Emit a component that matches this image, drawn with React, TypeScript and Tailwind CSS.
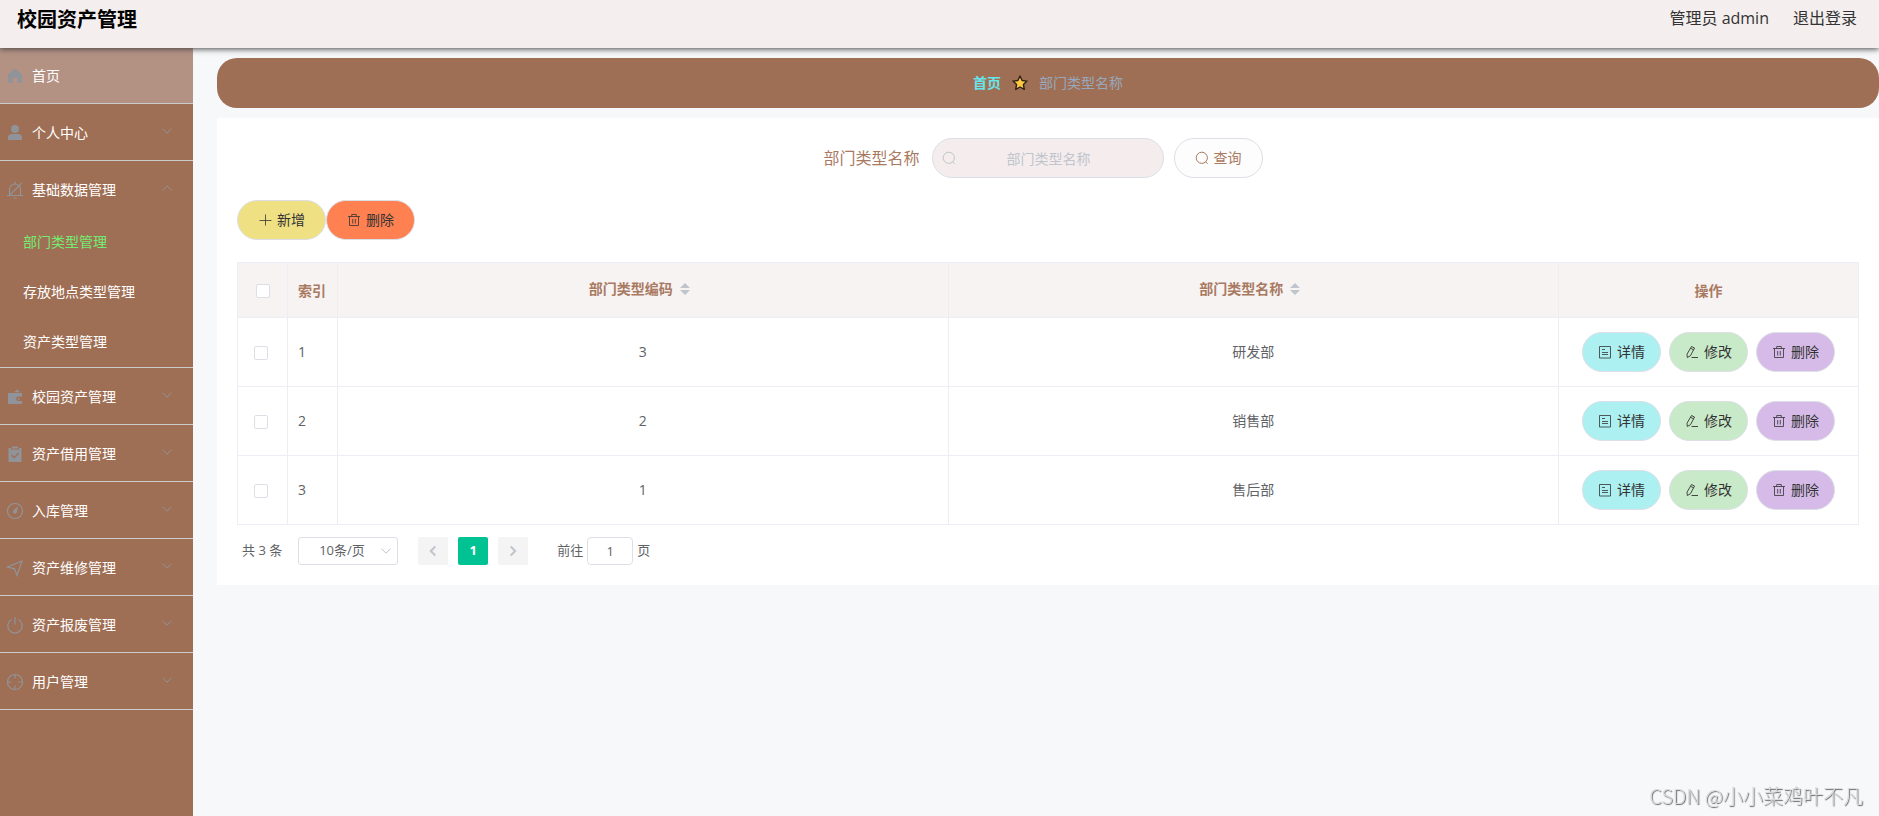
import React, { useState } from 'react';

type IconProps = { className?: string };

function SvgIcon({ className, children }: { className?: string; children: React.ReactNode }) {
  return (
    <svg viewBox="0 0 18 18" className={className} fill="none" stroke="currentColor" strokeWidth="1.2" aria-hidden="true">
      {children}
    </svg>
  );
}

const HomeIcon = ({ className }: IconProps) => (
  <SvgIcon className={className}>
    <path d="M9 1.600 16 7.400V16h-4.600v-5.200H6.600V16H2V7.400z" fill="currentColor" stroke="none" />
  </SvgIcon>
);

const UserIcon = ({ className }: IconProps) => (
  <SvgIcon className={className}>
    <circle cx="9" cy="5" r="4" fill="currentColor" stroke="none" />
    <path d="M2 16v-2.600C2 11.500 3.500 10 5.400 10h7.200c1.900 0 3.400 1.500 3.400 3.400V16z" fill="currentColor" stroke="none" />
  </SvgIcon>
);

const MuteIcon = ({ className }: IconProps) => (
  <SvgIcon className={className}>
    <path d="M3.500 14.500V8.500a5.500 5.500 0 0 1 11 0v6M1 14.500h16M9 .8v2.200M7.500 17h3M15.800 1.800 3.500 14.500" />
  </SvgIcon>
);

const WalletIcon = ({ className }: IconProps) => (
  <SvgIcon className={className}>
    <path d="M8 4.200 11.300 1.500 14 4.200zM2 5h14v3.500h-3.500a2.300 2.300 0 0 0 0 4.600H16V16H2z" fill="currentColor" stroke="none" />
    <circle cx="12.700" cy="10.800" r="1" fill="currentColor" stroke="none" />
  </SvgIcon>
);

const ClaimIcon = ({ className }: IconProps) => (
  <SvgIcon className={className}>
    <path d="M2.500 3H5v1.500h8V3h2.500v14h-13z" fill="currentColor" stroke="none" />
    <path d="M6 1.500h6v2H6z" fill="currentColor" stroke="none" />
    <path d="m5.500 10 2.700 2.700L12.700 8" stroke="#9f6f55" strokeWidth="1.200" />
  </SvgIcon>
);

const OdometerIcon = ({ className }: IconProps) => (
  <SvgIcon className={className}>
    <circle cx="9" cy="9" r="7.500" />
    <path d="m12 4.200-1 5.600a2 2 0 1 1-3.400-1.600z" fill="currentColor" stroke="none" />
  </SvgIcon>
);

const PositionIcon = ({ className }: IconProps) => (
  <SvgIcon className={className}>
    <path d="M16 2 1.500 8l7 1.800L11 16.500z" />
  </SvgIcon>
);

const SwitchIcon = ({ className }: IconProps) => (
  <SvgIcon className={className}>
    <path d="M5.500 3.600a7.200 7.200 0 1 0 7 0M9 1v7.500" />
  </SvgIcon>
);

const AimIcon = ({ className }: IconProps) => (
  <SvgIcon className={className}>
    <circle cx="9" cy="9" r="7.500" />
    <path d="M9 1.500v4M9 12.500v4M1.500 9h4M12.500 9h4" />
  </SvgIcon>
);

const ChevronIcon = ({ className }: IconProps) => (
  <svg viewBox="0 0 12 12" className={className} fill="none" stroke="currentColor" aria-hidden="true">
    <path d="m1.500 3.700 4.500 4.500 4.500-4.500" />
  </svg>
);

const SearchIcon = ({ className }: IconProps) => (
  <svg viewBox="0 0 14 14" className={className} fill="none" stroke="currentColor" aria-hidden="true">
    <circle cx="6.800" cy="6.800" r="5.600" />
    <path d="m10.600 10.800 2 2" />
  </svg>
);

const PlusIcon = ({ className }: IconProps) => (
  <svg viewBox="0 0 14 14" className={className} fill="none" stroke="currentColor" strokeWidth="0.8" aria-hidden="true">
    <path d="M7.500 1.500v11M1.500 7.500h12" />
  </svg>
);

const DeleteIcon = ({ className }: IconProps) => (
  <svg viewBox="0 0 14 14" className={className} fill="none" stroke="currentColor" strokeWidth="0.8" aria-hidden="true">
    <path d="M1 3.500h12M2.500 3.500v9h9v-9M4.700 3.500v-2h4.600v2M5.700 6v4.500M8.300 6v4.500" />
  </svg>
);

const TicketIcon = ({ className }: IconProps) => (
  <svg viewBox="0 0 14 14" className={className} fill="none" stroke="currentColor" strokeWidth="0.8" aria-hidden="true">
    <path d="M1.500 1.500h11v11.500h-11zM4 4.500h3M4 7.500h6M4 9.500h6" />
  </svg>
);

const EditIcon = ({ className }: IconProps) => (
  <svg viewBox="0 0 14 14" className={className} fill="none" stroke="currentColor" strokeWidth="0.9" aria-hidden="true">
    <path d="M6.500 1.500 9.500 3 5.500 10.700l-3.200 1.800-.3-3.300zM5.600 3.300l3 1.500M6.500 12.500H13" />
  </svg>
);

const StarIcon = ({ className }: IconProps) => (
  <svg viewBox="0 0 16 16" className={className} aria-hidden="true">
    <path
      d="m8 1 2.100 4.500 4.900.6-3.600 3.400.9 4.900L8 12l-4.300 2.400.9-4.900L1 6.100l4.900-.6z"
      fill="#ffc83d"
      stroke="#2b2118"
      strokeWidth="1.400"
      strokeLinejoin="round"
    />
  </svg>
);

const SortIcon = ({ className }: IconProps) => (
  <svg viewBox="0 0 10 12" className={className} fill="currentColor" aria-hidden="true">
    <path d="M5 0 10 5H0zM5 12 0 7h10z" />
  </svg>
);

const menus = [
  { title: '个人中心', icon: UserIcon, children: [] },
  { title: '基础数据管理', icon: MuteIcon, children: ['部门类型管理', '存放地点类型管理', '资产类型管理'] },
  { title: '校园资产管理', icon: WalletIcon, children: [] },
  { title: '资产借用管理', icon: ClaimIcon, children: [] },
  { title: '入库管理', icon: OdometerIcon, children: [] },
  { title: '资产维修管理', icon: PositionIcon, children: [] },
  { title: '资产报废管理', icon: SwitchIcon, children: [] },
  { title: '用户管理', icon: AimIcon, children: [] },
];

const rows = [
  { code: 3, name: '研发部' },
  { code: 2, name: '销售部' },
  { code: 1, name: '售后部' },
];

const checkboxClass =
  'block size-3.5 appearance-none rounded-[2px] border border-[#dcdfe6] bg-white checked:border-[#00c292] checked:bg-[#00c292]';

const cellClass = 'border-r border-b border-[#ebeef5]';

function Sidebar() {
  const [opened, setOpened] = useState('基础数据管理');
  const [active, setActive] = useState('部门类型管理');

  return (
    <nav className="w-[193px] shrink-0 bg-[#9f6f55] text-sm text-white">
      <a href="#home" className="flex h-14 items-center border-b border-[#ccc] bg-[#b39284] pl-1.5">
        <HomeIcon className="mr-2 size-[18px] text-[#909399]" />
        首页
      </a>
      {menus.map((menu) => {
        const isOpen = opened === menu.title;
        return (
          <div key={menu.title} className="border-b border-[#ccc]">
            <button
              type="button"
              aria-expanded={isOpen}
              onClick={() => setOpened(isOpen ? '' : menu.title)}
              className="flex h-14 w-full items-center pt-0.5 pr-5 pl-1.5"
            >
              <menu.icon className="mr-2 size-[18px] text-[#909399]" />
              {menu.title}
              <ChevronIcon className={`mb-1 ml-auto size-3 text-[#909399] ${isOpen ? 'rotate-180' : ''}`} />
            </button>
            {isOpen &&
              menu.children.map((child) => (
                <a
                  key={child}
                  href="#menu"
                  onClick={() => setActive(child)}
                  className={`flex h-[50px] items-center pl-[23px] ${active === child ? 'text-[#72ed72]' : 'text-white'}`}
                >
                  {child}
                </a>
              ))}
          </div>
        );
      })}
    </nav>
  );
}

function Pagination() {
  return (
    <div className="mt-3 flex h-7 items-center pl-[5px] text-[13px] text-[#606266]">
      <span className="mr-4">共 3 条</span>
      <div className="relative mr-5 w-[100px]">
        <select
          aria-label="每页条数"
          className="block h-7 w-full appearance-none rounded-[3px] border border-[#dcdfe6] bg-white pl-5 text-[13px]"
        >
          <option>10条/页</option>
          <option>20条/页</option>
          <option>50条/页</option>
        </select>
        <ChevronIcon className="pointer-events-none absolute top-2 right-1.5 size-3 text-[#c0c4cc]" />
      </div>
      <div className="flex gap-2.5">
        <button type="button" aria-label="上一页" disabled className="flex h-7 w-[30px] items-center justify-center rounded-[2px] bg-[#f4f4f5]">
          <ChevronIcon className="size-3 rotate-90 stroke-2 text-[#c0c4cc]" />
        </button>
        <button type="button" className="h-7 w-[30px] rounded-[2px] bg-[#00c292] font-bold text-white">
          1
        </button>
        <button type="button" aria-label="下一页" disabled className="flex h-7 w-[30px] items-center justify-center rounded-[2px] bg-[#f4f4f5]">
          <ChevronIcon className="size-3 -rotate-90 stroke-2 text-[#c0c4cc]" />
        </button>
      </div>
      <label className="ml-[29px] flex items-center gap-1">
        前往
        <input defaultValue="1" className="h-7 w-[46px] rounded-[4px] border border-[#dcdfe6] bg-white text-center" />
        页
      </label>
    </div>
  );
}

export default function App() {
  return (
    <div className="flex min-h-screen flex-col bg-[#f7f8fa] font-['Open_Sans','Noto_Sans_CJK_SC',sans-serif]">
      <header className="relative z-10 flex h-12 items-start justify-between bg-[#f4eeee] pr-[22px] pl-[17px] shadow-[0_1px_6px_#444]">
        <h1 className="text-xl leading-10 font-bold text-black">校园资产管理</h1>
        <div className="flex gap-6 text-base leading-9 text-[#333]">
          <span>管理员 admin</span>
          <a href="#logout">退出登录</a>
        </div>
      </header>

      <div className="flex flex-1">
        <Sidebar />

        <main className="min-w-0 flex-1 pt-2.5 pl-6">
          {/* Breadcrumb */}
          <div className="flex h-[50px] items-center justify-center gap-[11px] rounded-[20px] bg-[#9f6f55] text-sm">
            <a href="#home" className="font-bold text-[#66e5ec]">首页</a>
            <StarIcon className="size-4" />
            <span className="text-[#97a8be]">部门类型名称</span>
          </div>

          <section className="mt-2.5 bg-white p-5">
            {/* Search form */}
            <form className="flex items-center justify-center gap-2.5 pr-2.5" onSubmit={(e) => e.preventDefault()}>
              <label htmlFor="typeName" className="pr-0.5 text-base text-[#a97a62]">部门类型名称</label>
              <div className="relative">
                <input
                  id="typeName"
                  placeholder="部门类型名称"
                  className="block h-10 w-[232px] rounded-full border border-[#dcdfe6] bg-[#f5eded] pr-7 pl-[30px] text-center text-sm text-[#606266] placeholder:text-[#c0c4cc]"
                />
                <SearchIcon className="absolute top-[13px] left-2.5 size-3.5 text-[#c0c4cc]" />
              </div>
              <button
                type="submit"
                className="flex h-10 items-center gap-[5px] rounded-full border border-[#dcdfe6] bg-[#fdfdfd] px-5 text-sm text-[#a97a62]"
              >
                <SearchIcon className="size-3.5" />
                查询
              </button>
            </form>

            {/* Table actions */}
            <div className="mt-[22px] flex text-sm text-[#333]">
              <button type="button" className="flex h-10 items-center gap-[5px] rounded-full border border-[#dcdfe6] bg-[#f0e084] px-5">
                <PlusIcon className="size-3.5" />
                新增
              </button>
              <button type="button" className="flex h-10 items-center gap-[5px] rounded-full border border-[#dcdfe6] bg-[#ff8050] px-5">
                <DeleteIcon className="size-3.5" />
                删除
              </button>
            </div>

            <table className="mt-[22px] w-full table-fixed border-separate border-spacing-0 border-t border-l border-[#ebeef5] text-sm text-[#606266]">
              <colgroup>
                <col className="w-[50px]" />
                <col className="w-[50px]" />
                <col />
                <col />
                <col className="w-[300px]" />
              </colgroup>
              <thead className="bg-[#f7f3f3] text-[#a97a62]">
                <tr className="h-[55px]">
                  <th className={`${cellClass} pt-0.5 pl-[18px]`}>
                    <input type="checkbox" aria-label="全选" className={checkboxClass} />
                  </th>
                  <th className={`${cellClass} pt-0.5 pl-2.5 text-left font-bold`}>索引</th>
                  {['部门类型编码', '部门类型名称'].map((title) => (
                    <th key={title} className={`${cellClass} pb-0.5 font-bold`}>
                      <div className="flex items-center justify-center">
                        {title}
                        <button type="button" aria-label="排序" className="flex w-6 justify-center text-[#c0c4cc]">
                          <SortIcon className="h-3 w-2.5" />
                        </button>
                      </div>
                    </th>
                  ))}
                  <th className={`${cellClass} pt-0.5 font-bold`}>操作</th>
                </tr>
              </thead>
              <tbody>
                {rows.map((row, index) => (
                  <tr key={row.code} className="h-[69px]">
                    <td className={`${cellClass} pt-0.5 pl-4`}>
                      <input type="checkbox" aria-label={`选择${row.name}`} className={checkboxClass} />
                    </td>
                    <td className={`${cellClass} pl-2.5`}>{index + 1}</td>
                    <td className={`${cellClass} text-center`}>{row.code}</td>
                    <td className={`${cellClass} text-center`}>{row.name}</td>
                    <td className={cellClass}>
                      <div className="flex justify-center gap-2 text-[#333]">
                        <button type="button" className="flex h-10 items-center gap-[5px] rounded-full border border-[#dcdfe6] bg-[#adf0f2] px-[15px]">
                          <TicketIcon className="size-3.5" />
                          详情
                        </button>
                        <button type="button" className="flex h-10 items-center gap-[5px] rounded-full border border-[#dcdfe6] bg-[#c9eac9] px-[15px]">
                          <EditIcon className="size-3.5" />
                          修改
                        </button>
                        <button type="button" className="flex h-10 items-center gap-[5px] rounded-full border border-[#dcdfe6] bg-[#d6bbe8] px-[15px]">
                          <DeleteIcon className="size-3.5" />
                          删除
                        </button>
                      </div>
                    </td>
                  </tr>
                ))}
              </tbody>
            </table>

            <Pagination />
          </section>
        </main>
      </div>

      <div className="pointer-events-none fixed right-4 bottom-1.5 font-['Noto_Sans_CJK_SC',sans-serif] text-xl font-light text-[#dcdcdc] [text-shadow:1px_1px_1px_#666]">
        CSDN @小小菜鸡叶不凡
      </div>
    </div>
  );
}
